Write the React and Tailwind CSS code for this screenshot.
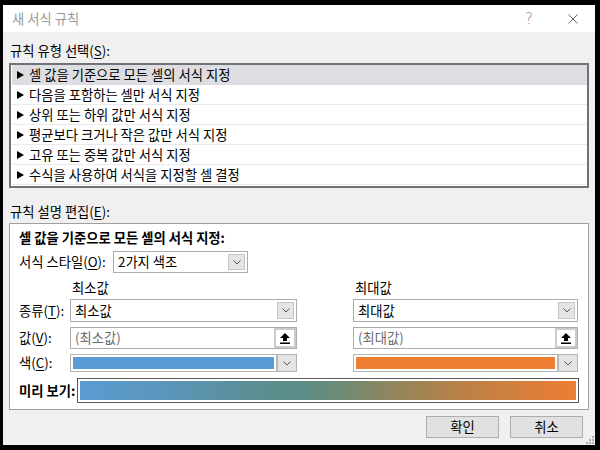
import React from "react";

const Chevron = () => (
  <svg width="8" height="5" viewBox="0 0 8 5">
    <path d="M0.5 0.5 L4 4 L7.5 0.5" fill="none" stroke="#555" strokeWidth="1" />
  </svg>
);

const UploadIcon = () => (
  <svg width="10" height="11" viewBox="0 0 10 11">
    <path d="M5 0 L10 5 L7 5 L7 8 L3 8 L3 5 L0 5 Z" fill="#000" />
    <rect x="0" y="9.5" width="10" height="1.5" fill="#000" />
  </svg>
);

const Tri = () => (
  <svg width="7" height="8" viewBox="0 0 7 8" className="shrink-0">
    <path d="M0 0 L7 4 L0 8 Z" fill="#000" />
  </svg>
);

const U = ({ children }) => <span className="underline underline-offset-2">{children}</span>;

function Combo({ text, className = "" }) {
  return (
    <div className={"flex items-stretch border border-[#acacac] bg-white p-[2px] " + className}>
      <div className="flex-1 flex items-center pl-[2px] text-black">{text}</div>
      <div className="w-[17px] bg-[#e5e5e5] border border-[#c6c6c6] flex items-center justify-center">
        <Chevron />
      </div>
    </div>
  );
}

function ValueInput({ text }) {
  return (
    <div className="flex items-stretch border border-[#acacac] bg-white h-[22px]">
      <div className="flex-1 flex items-center pl-[4px] text-[#6d6d6d]">{text}</div>
      <div className="w-[22px] bg-[#cbcbcb] p-[2px] flex">
        <div className="flex-1 bg-white flex items-center justify-center">
          <UploadIcon />
        </div>
      </div>
    </div>
  );
}

function ColorPick({ color }) {
  return (
    <div className="flex items-stretch border border-[#b4b4b4] bg-white h-[18px]">
      <div className="flex-1 p-[2px] flex">
        <div className={"flex-1 " + color} />
      </div>
      <div className="w-[20px] bg-[#e3e3e3] border-l-2 border-[#b8b8b8] flex items-center justify-center">
        <Chevron />
      </div>
    </div>
  );
}

const rules = [
  "셀 값을 기준으로 모든 셀의 서식 지정",
  "다음을 포함하는 셀만 서식 지정",
  "상위 또는 하위 값만 서식 지정",
  "평균보다 크거나 작은 값만 서식 지정",
  "고유 또는 중복 값만 서식 지정",
  "수식을 사용하여 서식을 지정할 셀 결정",
];

export default function App() {
  return (
    <div className="w-[600px] h-[450px] bg-black pt-[5px] pl-[3px] font-['Noto_Sans_CJK_KR','Noto_Sans',sans-serif] text-[13.3px] leading-[16px] text-black">
      <div className="w-[592px] h-[440px] bg-[#f0f0f0] flex flex-col relative">
        {/* Title bar */}
        <div className="h-[27px] bg-white flex items-center pl-[9px] pr-[17px] shrink-0">
          <span className="text-[#9a9a9a] text-[13.3px]">새 서식 규칙</span>
          <span className="ml-auto text-[#8a8a8a] text-[15px] leading-[16px] font-['DejaVu_Sans',sans-serif] font-extralight">?</span>
          <svg width="10" height="10" viewBox="0 0 10 10" className="ml-[35px]">
            <path d="M0.5 0.5 L9.5 9.5 M9.5 0.5 L0.5 9.5" stroke="#666" strokeWidth="1" />
          </svg>
        </div>

        {/* Body */}
        <div className="flex-1 px-[6px] pt-[11px] flex flex-col">
          <div className="pl-[1px]">
            규칙 유형 선택(<U>S</U>):
          </div>
          <div className="mt-[4px] border-2 border-[#6f7277] bg-white pl-[1px] pb-[1px] flex flex-col">
            {rules.map((r, i) => (
              <div
                key={i}
                className={
                  "h-[20px] flex items-center gap-[5px] pl-[5px] border-b " +
                  (i === 0 ? "bg-[#dedde2] border-[#dedde2]" : "border-[#ebebeb]")
                }
              >
                <Tri />
                <span>{r}</span>
              </div>
            ))}
          </div>

          <div className="pl-[1px] mt-[16px]">
            규칙 설명 편집(<U>E</U>):
          </div>
          <div className="mt-[3px] border border-[#a0a0a0] bg-white pl-[9px] pt-[6px] pb-[6px] flex flex-col">
            <div className="font-bold">셀 값을 기준으로 모든 셀의 서식 지정:</div>
            <div className="mt-[5px] flex items-center h-[22px]">
              <div className="w-[94px]">
                서식 스타일(<U>O</U>):
              </div>
              <Combo text="2가지 색조" className="w-[135px] h-[22px]" />
            </div>

            <div className="mt-[7px] grid grid-cols-[51px_227px_56px_225px] items-center">
              <div />
              <div className="pl-[2px]">최소값</div>
              <div />
              <div className="pl-[2px]">최대값</div>
            </div>

            <div className="mt-[3px] grid grid-cols-[51px_227px_56px_225px] items-center">
              <div>
                종류(<U>T</U>):
              </div>
              <Combo text="최소값" className="h-[23px]" />
              <div />
              <Combo text="최대값" className="h-[23px]" />
            </div>

            <div className="mt-[5px] grid grid-cols-[51px_227px_56px_225px] items-center">
              <div>
                값(<U>V</U>):
              </div>
              <ValueInput text="(최소값)" />
              <div />
              <ValueInput text="(최대값)" />
            </div>

            <div className="mt-[5px] grid grid-cols-[51px_227px_56px_225px] items-center">
              <div>
                색(<U>C</U>):
              </div>
              <ColorPick color="bg-[#5b9bd5]" />
              <div />
              <ColorPick color="bg-[#ed7d31]" />
            </div>

            <div className="mt-[6px] flex items-center">
              <div className="w-[58px] font-bold">미리 보기:</div>
              <div className="w-[502px] h-[25px] border border-[#5a5a5a] bg-white p-[2px] flex">
                <div className="flex-1 bg-[linear-gradient(90deg,#5b9bd5_0%,#5a95b5_20%,#5a8e90_37%,#5b8c86_45%,#768a6f_55%,#978459_65%,#b4824a_75%,#cc8040_85%,#ed7d31_100%)]" />
              </div>
            </div>
          </div>

          <div className="mt-[6px] mr-[6px] flex justify-end gap-[11px]">
            <div className="w-[73px] h-[22px] bg-[#e1e1e1] border border-[#adadad] flex items-center justify-center">
              확인
            </div>
            <div className="w-[73px] h-[22px] bg-[#e1e1e1] border border-[#adadad] flex items-center justify-center">
              취소
            </div>
          </div>
        </div>

        {/* resize grip */}
        <svg width="9" height="9" viewBox="0 0 9 9" className="absolute right-[1px] bottom-[1px]">
          <rect x="7" y="1" width="2" height="2" fill="#b0b0b0" />
          <rect x="4" y="4" width="2" height="2" fill="#b0b0b0" />
          <rect x="7" y="4" width="2" height="2" fill="#b0b0b0" />
          <rect x="1" y="7" width="2" height="2" fill="#b0b0b0" />
          <rect x="4" y="7" width="2" height="2" fill="#b0b0b0" />
          <rect x="7" y="7" width="2" height="2" fill="#b0b0b0" />
        </svg>
      </div>
    </div>
  );
}
